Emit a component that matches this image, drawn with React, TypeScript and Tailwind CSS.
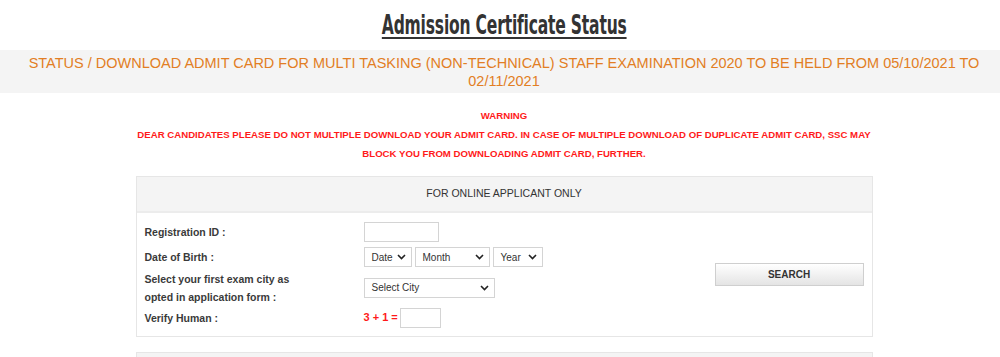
import React from "react"

function Chevron() {
  return (
    <svg width="9" height="6" viewBox="0 0 9 6" className="shrink-0">
      <path d="M1 1l3.5 3.5L8 1" fill="none" stroke="#222" strokeWidth="1.6" />
    </svg>
  )
}

function FakeSelect({ label, width }: { label: string; width: string }) {
  return (
    <div
      className={`${width} h-[20px] flex items-center justify-between border border-[#d4d4d4] bg-white pl-[7px] pr-[5px] text-[10px] font-normal text-[#333]`}
    >
      <span>{label}</span>
      <Chevron />
    </div>
  )
}

export default function App() {
  return (
    <main className="min-h-screen bg-white font-['Liberation_Sans',Arial,sans-serif] text-[#333]">
      {/* Title */}
      <div className="pl-2 pt-[8px] h-[50px] text-center">
        <h1 className="inline-block scale-x-[0.64] font-['DejaVu_Sans_Condensed',sans-serif] font-bold text-[27px] leading-[34px] tracking-[-0.3px] text-[#333] underline underline-offset-[3px] decoration-[2px]">
          Admission Certificate Status
        </h1>
      </div>

      {/* Orange band */}
      <div className="bg-[#f4f4f4] h-[43px] pl-2 flex items-center justify-center">
        <p className="text-[14.5px] leading-[18px] text-[#e27e24] text-center w-[970px]">
          STATUS / DOWNLOAD ADMIT CARD FOR MULTI TASKING (NON-TECHNICAL) STAFF EXAMINATION 2020 TO BE HELD FROM 05/10/2021 TO 02/11/2021
        </p>
      </div>

      {/* Warning */}
      <div className="pl-2 pt-[13px] flex justify-center">
        <div className="w-[742px] text-center font-bold text-[9.65px] leading-[19px] text-[#ff1a1a]">
          <p>WARNING</p>
          <p>
            DEAR CANDIDATES PLEASE DO NOT MULTIPLE DOWNLOAD YOUR ADMIT CARD. IN CASE OF MULTIPLE DOWNLOAD OF DUPLICATE ADMIT CARD, SSC MAY BLOCK YOU FROM DOWNLOADING ADMIT CARD, FURTHER.
          </p>
        </div>
      </div>

      {/* Panel */}
      <div className="pl-2 pt-[13px] flex flex-col items-center gap-[15px]">
        <div className="w-[737px] border border-[#e6e6e6]">
          <div className="h-[36px] bg-[#f4f4f4] border-b-2 border-[#ececec] flex items-center justify-center text-[10.5px] text-[#333]">
            FOR ONLINE APPLICANT ONLY
          </div>
          <div className="flex pt-[6px] pb-[6px]">
            <div className="flex-1 grid grid-cols-[227px_1fr] grid-rows-[25px_26px_35px_25px] items-center text-[10.5px] font-bold text-[#3a3a3a]">
              <span className="pl-[8px] pt-[2px]">Registration ID :</span>
              <div className="w-[75px] h-[20px] border border-[#d4d4d4] bg-white" />

              <span className="pl-[8px] pt-[2px]">Date of Birth :</span>
              <div className="flex gap-[3px]">
                <FakeSelect label="Date" width="w-[48px]" />
                <FakeSelect label="Month" width="w-[75px]" />
                <FakeSelect label="Year" width="w-[50px]" />
              </div>

              <span className="pl-[8px] leading-[18px]">
                Select your first exam city as
                <br />
                opted in application form :
              </span>
              <FakeSelect label="Select City" width="w-[131px]" />

              <span className="pl-[8px] pt-[2px]">Verify Human :</span>
              <div className="flex items-center gap-[2px]">
                <span className="text-[#ff1a1a] font-bold text-[11px]">3 + 1 =</span>
                <div className="w-[41px] h-[20px] border border-[#d4d4d4] bg-white" />
              </div>
            </div>
            <div className="w-[157px] flex items-center">
              <button className="w-[149px] h-[23px] border border-[#cfcfcf] bg-gradient-to-b from-white to-[#e4e4e4] text-[10px] font-bold text-[#333]">
                SEARCH
              </button>
            </div>
          </div>
        </div>
        <div className="w-[737px] h-[40px] border border-[#e6e6e6] bg-[#f4f4f4]" />
      </div>
    </main>
  )
}
